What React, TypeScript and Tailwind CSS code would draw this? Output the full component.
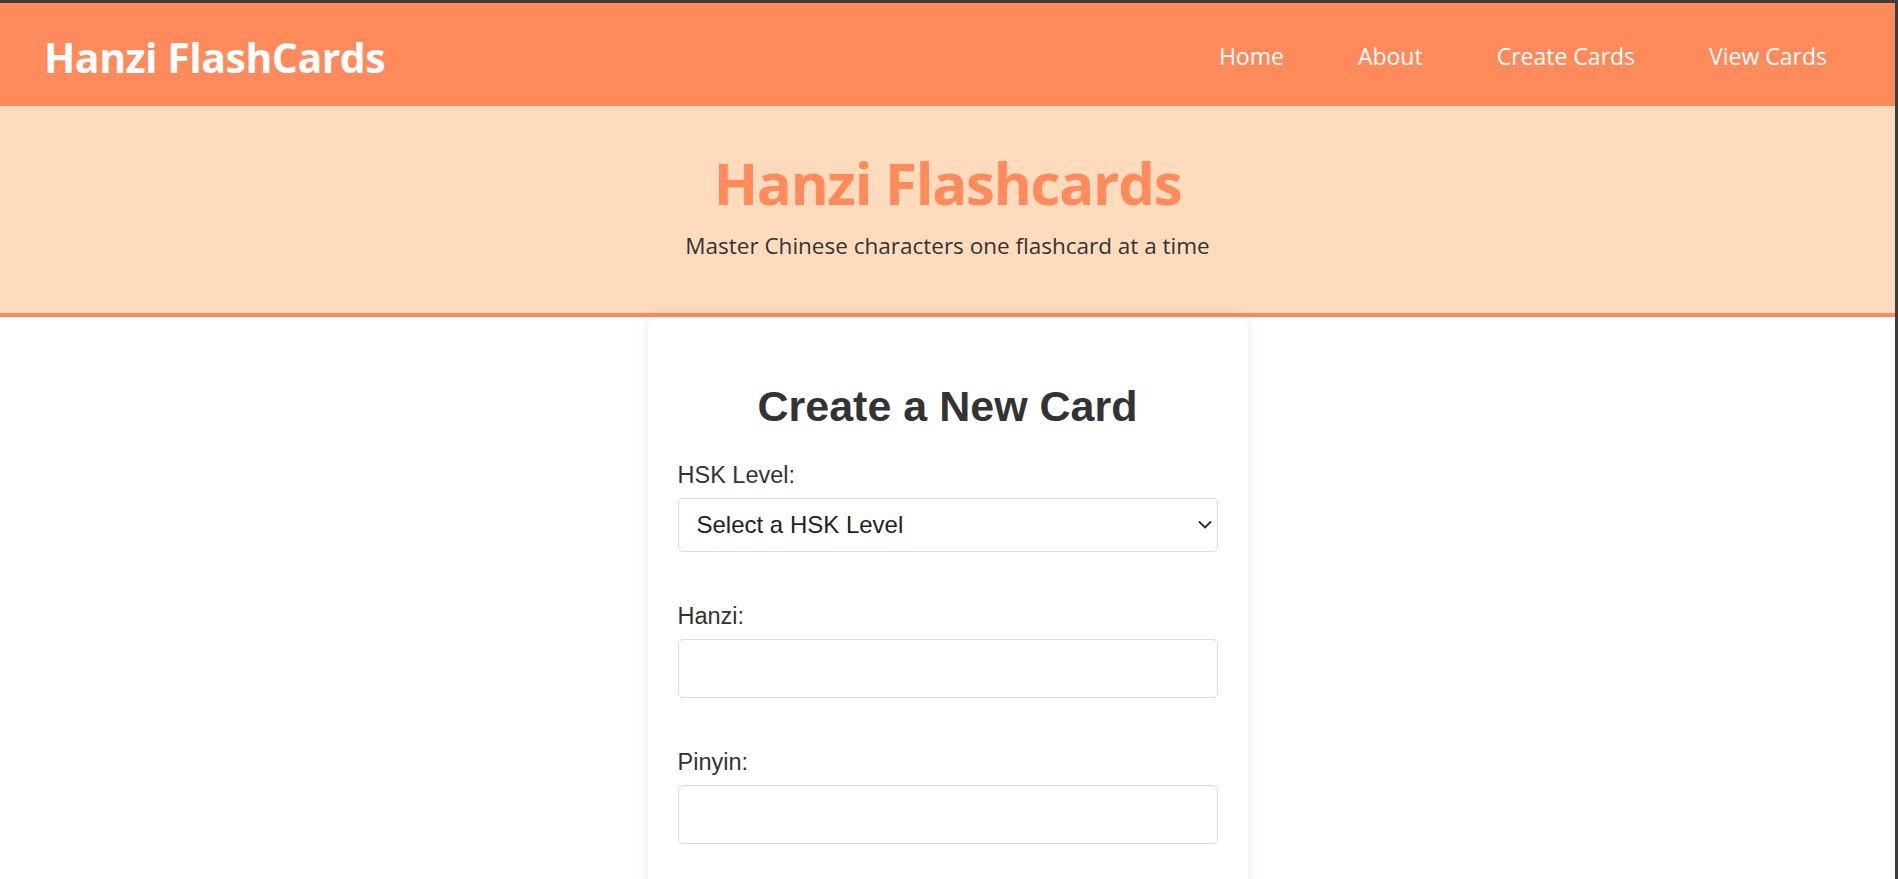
import React from "react";

const seg = { fontFamily: '"Open Sans", "Noto Sans", sans-serif' };
const arial = { fontFamily: '"Liberation Sans", Arial, sans-serif' };

function Chevron() {
  return (
    <svg width="14" height="9" viewBox="0 0 14 9" fill="none" className="pointer-events-none absolute right-[6px] top-1/2 -translate-y-1/2">
      <path d="M1.5 1.5 L7 7 L12.5 1.5" stroke="#333" strokeWidth="2" strokeLinecap="round" strokeLinejoin="round" />
    </svg>
  );
}

export default function App() {
  return (
    <div className="min-h-screen w-full bg-white border-t-[3px] border-r-[3px] border-[#3d3d3d]">
      <nav className="flex h-[103px] items-center justify-between bg-[#ff8a5c] pl-[44px] pr-[68px] pt-[6px]" style={seg}>
        <a href="#" className="text-[41px] font-bold leading-none text-white tracking-[-0.5px]">Hanzi FlashCards</a>
        <ul className="flex items-center gap-[74px]">
          {["Home", "About", "Create Cards", "View Cards"].map((l) => (
            <li key={l}>
              <a href="#" className="text-[23px] leading-none text-white">{l}</a>
            </li>
          ))}
        </ul>
      </nav>
      <header className="flex flex-col items-center border-b-4 border-[#ff8a5c] bg-[#ffdbbd] pt-[47px] pb-[52px]" style={seg}>
        <h1 className="text-[58px] font-bold leading-[60px] text-[#ff8a5c] tracking-[-1.2px]">Hanzi Flashcards</h1>
        <p className="mt-[18px] text-[22.5px] leading-[30px] text-[#333]">Master Chinese characters one flashcard at a time</p>
      </header>
      <main className="flex justify-center">
        <div className="mt-px w-[600px] rounded-[10px] bg-white px-[30px] pt-[30px] pb-[80px] shadow-[0_0_16px_rgba(0,0,0,0.09)]" style={arial}>
          <h2 className="mt-[34px] text-center text-[43px] font-bold leading-[48px] text-[#333]">Create a New Card</h2>
          <div className="mt-[32px] flex flex-col">
            <label className="text-[23.5px] leading-[27px] text-[#333]">HSK Level:</label>
            <div className="relative mt-[9px]">
              <select className="h-[54px] w-full appearance-none rounded-[5px] border border-[#dcdcdc] bg-white pl-[18px] text-[24px] text-[#222] outline-none" style={arial} defaultValue="">
                <option value="">Select a HSK Level</option>
                <option value="1">HSK 1</option>
                <option value="2">HSK 2</option>
                <option value="3">HSK 3</option>
                <option value="4">HSK 4</option>
                <option value="5">HSK 5</option>
                <option value="6">HSK 6</option>
              </select>
              <Chevron />
            </div>
          </div>
          <div className="mt-[51px] flex flex-col">
            <label className="text-[23.5px] leading-[27px] text-[#333]">Hanzi:</label>
            <input type="text" className="mt-[9px] h-[59px] w-full rounded-[5px] border border-[#dcdcdc] bg-white px-[15px] text-[23px] outline-none" style={arial} />
          </div>
          <div className="mt-[51px] flex flex-col">
            <label className="text-[23.5px] leading-[27px] text-[#333]">Pinyin:</label>
            <input type="text" className="mt-[9px] h-[59px] w-full rounded-[5px] border border-[#dcdcdc] bg-white px-[15px] text-[23px] outline-none" style={arial} />
          </div>
        </div>
      </main>
    </div>
  );
}
